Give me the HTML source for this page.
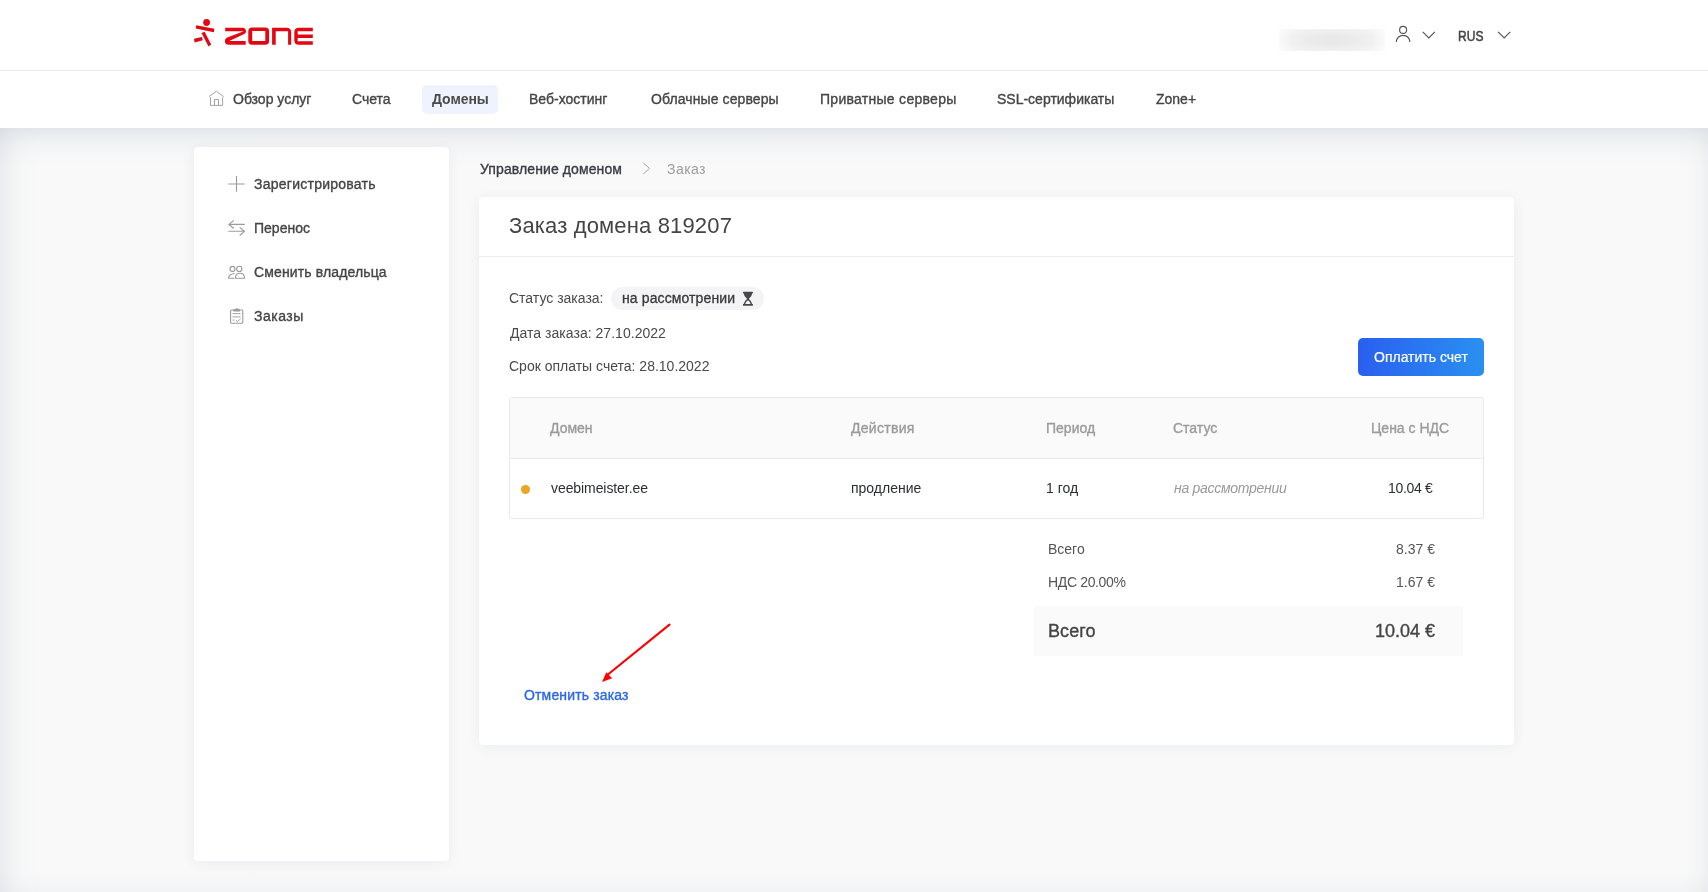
<!DOCTYPE html>
<html><head><meta charset="utf-8">
<style>
*{box-sizing:border-box;margin:0;padding:0}
html,body{width:1708px;height:892px;overflow:hidden}
body{font-family:"Liberation Sans",sans-serif;background:#f9f9f9;color:#333;position:relative}
.abs{position:absolute}
.t{position:absolute;white-space:nowrap;will-change:transform}
#header{position:absolute;left:0;top:0;width:1708px;height:71px;background:#fff;border-bottom:1px solid #e8e8ec}
#nav{position:absolute;left:0;top:71px;width:1708px;height:57px;background:#fff}
#main{position:absolute;left:0;top:128px;width:1708px;height:764px;background:linear-gradient(to bottom, rgba(196,204,214,0.41) 0, rgba(196,204,214,0.30) 6px, rgba(196,204,214,0.16) 14px, rgba(196,204,214,0.05) 25px, rgba(196,204,214,0) 40px),linear-gradient(to top, rgba(196,204,214,0.13) 0, rgba(196,204,214,0.05) 10px, rgba(196,204,214,0) 22px),linear-gradient(to right, rgba(196,204,214,0.30) 0, rgba(196,204,214,0.15) 11px, rgba(196,204,214,0.04) 23px, rgba(196,204,214,0) 38px),linear-gradient(to left, rgba(196,204,214,0.22) 0, rgba(196,204,214,0.09) 9px, rgba(196,204,214,0.02) 20px, rgba(196,204,214,0) 30px),#f9f9f9}
#blur{background:linear-gradient(to bottom, rgba(255,255,255,0.35) 0, rgba(255,255,255,0) 35%, rgba(255,255,255,0) 65%, rgba(255,255,255,0.35) 100%),linear-gradient(90deg,#fafafa 0,#f1f1f1 12%,#ebebeb 30%,#e9e9e9 50%,#ebebeb 70%,#f1f1f1 88%,#fafafa 100%)}
.card{position:absolute;background:#fff;border-radius:4px;box-shadow:0 2px 14px rgba(50,60,100,0.065)}
</style></head>
<body>
<div id="header"></div>
<svg class="abs" style="left:188px;top:12px" width="132" height="40" viewBox="188 12 132 40" fill="#e30613">
<circle cx="206.6" cy="22.5" r="3.4"/>
<polygon points="196.3,25.3 214.4,28.8 213.9,32.2 195.7,28.6"/>
<polygon points="201.5,32.9 204.6,31.7 211.2,44.5 208.5,46.6"/>
<polygon points="194.0,38.7 201.9,36.9 202.8,40.2 194.6,42.5"/>
<path d="M225.22,27.63 L242.2,27.63 Q246,27.63 246,31.44 Q246,33.2 244.25,33.93 L229.32,40.95 L245.71,40.95 L245.71,44.76 L228.73,44.76 Q224.93,44.76 224.93,40.95 Q224.93,38.47 226.68,37.65 L243.66,31.29 L225.22,31.29 Z"/>
<path fill-rule="evenodd" d="M252.1,27.6 H265.3 Q269.1,27.6 269.1,31.4 V41 Q269.1,44.8 265.3,44.8 H252.1 Q248.3,44.8 248.3,41 V31.4 Q248.3,27.6 252.1,27.6 Z M252.2,31.1 V41.1 H265.3 V31.1 Z"/>
<path d="M272.1,44.8 V27.8 H286.6 Q291.2,27.8 291.2,32.4 V44.8 H288.1 V31.3 H275.7 V44.8 Z"/>
<path d="M312.8,27.8 H298.9 Q294.3,27.8 294.3,32.4 V40.2 Q294.3,44.8 298.9,44.8 H312.8 V41.2 H297.7 V37.9 H312.8 V34.4 H297.7 V31.3 H312.8 Z"/>
</svg>
<div class="abs" id="blur" style="left:1279px;top:29px;width:106px;height:22px"></div>
<svg class="abs" style="left:1380px;top:20px" width="140" height="30" viewBox="1380 20 140 30" fill="none" stroke="#555" stroke-width="1.15">
<circle cx="1403.1" cy="29.9" r="3.5"/>
<path d="M1396.3,41.9 A6.8,6.6 0 0 1 1409.9,41.9"/>
<path d="M1422.7,31.8 L1428.8,37.9 L1434.9,31.8"/>
<path d="M1498.1,31.8 L1504.2,37.9 L1510.3,31.8"/>
</svg>
<div class="t " style="left:1457.6px;top:29.05px;font-size:14px;line-height:14px;color:#444;-webkit-text-stroke:0.5px #444;"><span style="display:inline-block;transform:scaleX(0.86);transform-origin:0 0">RUS</span></div>
<div id="nav"></div>
<div class="abs" style="left:422px;top:85px;width:76px;height:29px;background:#eef3fd;border-radius:5px"></div>
<svg class="abs" style="left:204px;top:86px" width="26" height="24" viewBox="204 86 26 24" fill="none" stroke="#9a9a9a" stroke-width="0.9">
<path d="M209.1,96.6 L216.4,91.3 L223.8,96.6"/>
<path d="M210.5,97.2 V105.4 H222.6 V97.2"/>
<path d="M214.5,105.4 V99.5 H218.5 V105.4"/>
</svg>
<div class="t " style="left:232.7px;top:91.75px;font-size:14px;line-height:14px;color:#454545;-webkit-text-stroke:0.35px #454545;">Обзор услуг</div>
<div class="t " style="left:352.2px;top:91.75px;font-size:14px;line-height:14px;color:#454545;-webkit-text-stroke:0.35px #454545;">Счета</div>
<div class="t " style="left:528.8px;top:91.75px;font-size:14px;line-height:14px;color:#454545;-webkit-text-stroke:0.35px #454545;">Веб-хостинг</div>
<div class="t " style="left:650.6px;top:91.75px;font-size:14px;line-height:14px;color:#454545;-webkit-text-stroke:0.35px #454545;letter-spacing:0.1px;">Облачные серверы</div>
<div class="t " style="left:819.8px;top:91.75px;font-size:14px;line-height:14px;color:#454545;-webkit-text-stroke:0.35px #454545;letter-spacing:0.28px;">Приватные серверы</div>
<div class="t " style="left:996.8px;top:91.75px;font-size:14px;line-height:14px;color:#454545;-webkit-text-stroke:0.35px #454545;">SSL-сертификаты</div>
<div class="t " style="left:1155.6px;top:91.75px;font-size:14px;line-height:14px;color:#454545;-webkit-text-stroke:0.35px #454545;">Zone+</div>
<div class="t " style="left:431.8px;top:91.75px;font-size:14px;line-height:14px;color:#4a4a4a;font-weight:bold;letter-spacing:-0.05px;">Домены</div>
<div id="main"></div>
<div class="card" style="left:194px;top:147px;width:255px;height:714px"></div>
<svg class="abs" style="left:222px;top:170px" width="30" height="160" viewBox="222 170 30 160" fill="none" stroke="#9a9a9a" stroke-width="1.1">
<path d="M236.5,176 V191.8 M228.3,184 H244.8"/>
<path d="M228.9,224.4 H244.8 M233.8,220.3 L228.9,224.4 L233.8,228.5"/>
<path d="M228.3,231.3 H244.4 M239.7,227.3 L244.4,231.3 L239.7,235.5"/>
<circle cx="232.5" cy="268.9" r="2.5"/>
<circle cx="239.3" cy="268.9" r="2.6"/>
<path d="M234.6,273.5 Q228.6,274.5 228.6,278.2 H234.2"/>
<path d="M235.4,278.2 Q235.6,273.3 240,273.3 Q244.4,273.3 244.6,278.2 Z"/>
<rect x="230.6" y="310" width="12.2" height="13.2" rx="1"/>
<path d="M232.5,313.6 H240.5 M232.5,316.9 H240.5 M232.5,320.1 H234.5 M236.1,320.4 L237.7,321.6 L240.6,318.8" stroke-width="0.9"/>
</svg>
<svg class="abs" style="left:230px;top:304px" width="16" height="10" viewBox="230 304 16 10" fill="#9a9a9a">
<path d="M233.3,311.4 V309.3 H235.3 Q236.5,307 238.8,309.3 H239.9 V311.4 Z"/>
</svg>
<div class="t " style="left:253.9px;top:177.35px;font-size:14px;line-height:14px;color:#454545;-webkit-text-stroke:0.35px #454545;letter-spacing:0.25px;">Зарегистрировать</div>
<div class="t " style="left:253.9px;top:221.25px;font-size:14px;line-height:14px;color:#454545;-webkit-text-stroke:0.35px #454545;letter-spacing:0px;">Перенос</div>
<div class="t " style="left:253.9px;top:264.75px;font-size:14px;line-height:14px;color:#454545;-webkit-text-stroke:0.35px #454545;letter-spacing:0.13px;">Сменить владельца</div>
<div class="t " style="left:253.9px;top:309.05px;font-size:14px;line-height:14px;color:#454545;-webkit-text-stroke:0.35px #454545;letter-spacing:0.5px;">Заказы</div>
<div class="t " style="left:479.8px;top:162.15px;font-size:14px;line-height:14px;color:#3b3b45;-webkit-text-stroke:0.35px #3b3b45;letter-spacing:0.1px;">Управление доменом</div>
<svg class="abs" style="left:638px;top:158px" width="16" height="20" viewBox="638 158 16 20" fill="none" stroke="#a8a8a8" stroke-width="1">
<path d="M643.2,162.8 L649.5,168.4 L643.2,174"/>
</svg>
<div class="t " style="left:666.7px;top:162.15px;font-size:14px;line-height:14px;color:#9d9d9d;letter-spacing:0.45px;">Заказ</div>
<div class="card" style="left:479px;top:197px;width:1035px;height:548px"></div>
<div class="abs" style="left:479px;top:256px;width:1035px;height:1px;background:#ebebf0"></div>
<div class="t " style="left:509.3px;top:214.58px;font-size:22px;line-height:22px;color:#444;letter-spacing:0.15px;">Заказ домена 819207</div>
<div class="t " style="left:509.0px;top:291.15px;font-size:14px;line-height:14px;color:#4a4a4a;">Статус заказа:</div>
<div class="abs" style="left:611px;top:287px;width:153px;height:23px;background:#f4f4f6;border-radius:12px"></div>
<div class="t " style="left:622.3px;top:291.15px;font-size:14px;line-height:14px;color:#383838;letter-spacing:0.11px;-webkit-text-stroke:0.3px #383838;">на рассмотрении</div>
<svg class="abs" style="left:740px;top:290px" width="16" height="18" viewBox="740 290 16 18" fill="#474747">
<path d="M743,291.8 H752.9 V293.3 H752.3 Q751.9,296.8 748.7,299 H747.2 Q744,296.8 743.6,293.3 H743 Z"/>
<path fill-rule="evenodd" d="M747.2,298.8 H748.7 Q751.9,301.4 752.2,304.1 H752.9 V305.8 H743 V304.1 H743.7 Q744,301.4 747.2,298.8 Z M745.3,304.1 H750.6 Q750.3,302.1 747.95,300.3 Q745.6,302.1 745.3,304.1 Z"/>
</svg>
<div class="t " style="left:510.0px;top:325.85px;font-size:14px;line-height:14px;color:#4a4a4a;letter-spacing:0.03px;">Дата заказа: 27.10.2022</div>
<div class="t " style="left:509.0px;top:358.65px;font-size:14px;line-height:14px;color:#4a4a4a;">Срок оплаты счета: 28.10.2022</div>
<div class="abs" style="left:1358px;top:338px;width:126px;height:38px;border-radius:5px;background:linear-gradient(90deg,#2a5ff0,#2a90f0)"></div>
<div class="t " style="left:1373.5px;top:349.75px;font-size:14px;line-height:14px;color:#fff;-webkit-text-stroke:0.2px #fff;">Оплатить счет</div>
<div class="abs" style="left:509px;top:397px;width:975px;height:122px;border:1px solid #e8e8ee;border-radius:3px;overflow:hidden"><div style="height:61px;background:#fafafb;border-bottom:1px solid #e8e8ee"></div></div>
<div class="t " style="left:550.3px;top:421.05px;font-size:14px;line-height:14px;color:#9b9b9b;-webkit-text-stroke:0.35px #9b9b9b;">Домен</div>
<div class="t " style="left:851.2px;top:421.05px;font-size:14px;line-height:14px;color:#9b9b9b;-webkit-text-stroke:0.35px #9b9b9b;letter-spacing:0.3px;">Действия</div>
<div class="t " style="left:1045.7px;top:421.05px;font-size:14px;line-height:14px;color:#9b9b9b;-webkit-text-stroke:0.35px #9b9b9b;">Период</div>
<div class="t " style="left:1172.5px;top:421.05px;font-size:14px;line-height:14px;color:#9b9b9b;-webkit-text-stroke:0.35px #9b9b9b;">Статус</div>
<div class="t" style="right:259.0px;top:421.05px;font-size:14px;line-height:14px;color:#9b9b9b;-webkit-text-stroke:0.35px #9b9b9b;">Цена с НДС</div>
<div class="abs" style="left:520.9px;top:484.9px;width:9px;height:9px;border-radius:50%;background:#eba51e"></div>
<div class="t " style="left:550.5px;top:481.25px;font-size:14px;line-height:14px;color:#2b2e35;letter-spacing:-0.08px;">veebimeister.ee</div>
<div class="t " style="left:850.8px;top:481.15px;font-size:14px;line-height:14px;color:#2b2e35;">продление</div>
<div class="t " style="left:1045.7px;top:481.15px;font-size:14px;line-height:14px;color:#2b2e35;">1 год</div>
<div class="t " style="left:1174.0px;top:481.15px;font-size:14px;line-height:14px;color:#9a9a9a;font-style:italic;letter-spacing:-0.28px;">на рассмотрении</div>
<div class="t" style="right:275.3px;top:481.15px;font-size:14px;line-height:14px;color:#2b2e35;letter-spacing:-0.3px;">10.04 €</div>
<div class="t " style="left:1047.5px;top:542.45px;font-size:14px;line-height:14px;color:#555;">Всего</div>
<div class="t" style="right:273.2px;top:542.45px;font-size:14px;line-height:14px;color:#555;">8.37 €</div>
<div class="t " style="left:1047.5px;top:575.25px;font-size:14px;line-height:14px;color:#555;letter-spacing:-0.35px;">НДС 20.00%</div>
<div class="t" style="right:273.2px;top:575.25px;font-size:14px;line-height:14px;color:#555;">1.67 €</div>
<div class="abs" style="left:1034px;top:606px;width:429px;height:50px;background:#fafafa"></div>
<div class="t " style="left:1047.8px;top:622.06px;font-size:18px;line-height:18px;color:#444;-webkit-text-stroke:0.35px #444;letter-spacing:0.1px;">Всего</div>
<div class="t" style="right:272.7px;top:622.06px;font-size:18px;line-height:18px;color:#444;-webkit-text-stroke:0.35px #444;">10.04 €</div>
<div class="t " style="left:524.3px;top:688.35px;font-size:14px;line-height:14px;color:#2b66e8;-webkit-text-stroke:0.35px #2b66e8;letter-spacing:0.15px;">Отменить заказ</div>
<svg class="abs" style="left:590px;top:615px" width="90" height="75" viewBox="590 615 90 75">
<line x1="669.5" y1="624.6" x2="607" y2="675.3" stroke="#f00" stroke-width="2.1" stroke-linecap="round"/>
<polygon points="602.1,681.9 606.3,672.2 612.1,678.3" fill="#f00"/>
</svg>
</body></html>
